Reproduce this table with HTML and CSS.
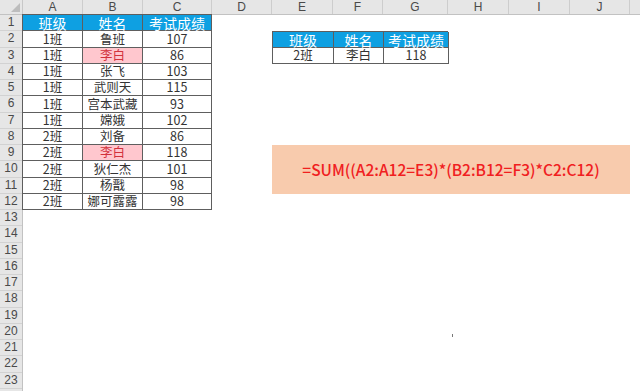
FILE: index.html
```html
<!DOCTYPE html>
<html lang="zh-CN">
<head>
<meta charset="utf-8">
<link rel="stylesheet" href="styles.css">
</head>
<body>
<div class="sheet">
  <div class="colhead">
    <div class="corner"><span class="tri"></span></div>
    <div class="ch w60">A</div>
    <div class="ch w60">B</div>
    <div class="ch w69">C</div>
    <div class="ch w60">D</div>
    <div class="ch w61">E</div>
    <div class="ch w50">F</div>
    <div class="ch w65">G</div>
    <div class="ch w61">H</div>
    <div class="ch w61">I</div>
    <div class="ch w60">J</div>
    <div class="ch wrest"></div>
  </div>
  <div class="body">
    <div class="rowhead">
      <div class="rh">1</div><div class="rh">2</div><div class="rh">3</div><div class="rh">4</div>
      <div class="rh">5</div><div class="rh">6</div><div class="rh">7</div><div class="rh">8</div>
      <div class="rh">9</div><div class="rh">10</div><div class="rh">11</div><div class="rh">12</div>
      <div class="rh">13</div><div class="rh">14</div><div class="rh">15</div><div class="rh">16</div>
      <div class="rh">17</div><div class="rh">18</div><div class="rh">19</div><div class="rh">20</div>
      <div class="rh">21</div><div class="rh">22</div><div class="rh">23</div><div class="rh">24</div>
    </div>
    <div class="canvas">
      <div class="tbl left-table">
        <div class="th">班级</div><div class="th">姓名</div><div class="th">考试成绩</div>
        <div class="td">1班</div><div class="td">鲁班</div><div class="td">107</div>
        <div class="td">1班</div><div class="td hl">李白</div><div class="td">86</div>
        <div class="td">1班</div><div class="td">张飞</div><div class="td">103</div>
        <div class="td">1班</div><div class="td">武则天</div><div class="td">115</div>
        <div class="td">1班</div><div class="td">宫本武藏</div><div class="td">93</div>
        <div class="td">1班</div><div class="td">嫦娥</div><div class="td">102</div>
        <div class="td">2班</div><div class="td">刘备</div><div class="td">86</div>
        <div class="td">2班</div><div class="td hl">李白</div><div class="td">118</div>
        <div class="td">2班</div><div class="td">狄仁杰</div><div class="td">101</div>
        <div class="td">2班</div><div class="td">杨戬</div><div class="td">98</div>
        <div class="td">2班</div><div class="td">娜可露露</div><div class="td">98</div>
      </div>
      <div class="tbl right-table">
        <div class="th">班级</div><div class="th">姓名</div><div class="th">考试成绩</div>
        <div class="td">2班</div><div class="td">李白</div><div class="td">118</div>
      </div>
      <div class="formula">=SUM((A2:A12=E3)*(B2:B12=F3)*C2:C12)</div>
      <div class="dot"></div>
    </div>
  </div>
</div>
</body>
</html>
```

FILE: styles.css
```css
* { box-sizing: border-box; }
html, body { margin: 0; padding: 0; background: #fff; }
body { width: 640px; height: 391px; overflow: hidden; }

.sheet {
  width: 640px;
  height: 391px;
  overflow: hidden;
  display: flex;
  flex-direction: column;
  font-family: "Noto Sans CJK SC", "Noto Sans", sans-serif;
}

.colhead {
  display: flex;
  height: 15px;
  flex: none;
  background: #e6e6e6;
  border-bottom: 1px solid #c2c2c2;
}
.corner {
  width: 23px;
  flex: none;
  border-right: 1px solid #c8c8c8;
  position: relative;
}
.tri {
  position: absolute;
  right: 2px;
  bottom: 2px;
  width: 0;
  height: 0;
  border-left: 9px solid transparent;
  border-bottom: 9px solid #bdbdbd;
}
.ch {
  flex: none;
  border-right: 1px solid #cdcdcd;
  text-align: center;
  font: 12px/14px "Liberation Sans", sans-serif;
  color: #4a4a4a;
}
.w60 { width: 60px; }
.w69 { width: 69px; }
.w61 { width: 61px; }
.w50 { width: 50px; }
.w65 { width: 65px; }
.wrest { flex: 1; border-right: 0; }

.body {
  display: flex;
  flex: 1;
  min-height: 0;
}
.rowhead {
  width: 23px;
  flex: none;
  display: flex;
  flex-direction: column;
  background: #e6e6e6;
  border-right: 1px solid #c2c2c2;
}
.rh {
  height: 16.25px;
  flex: none;
  border-bottom: 1px solid #d2d2d2;
  text-align: center;
  font: 12px/15px "Liberation Sans", sans-serif;
  color: #4a4a4a;
  overflow: hidden;
}

.canvas {
  flex: 1;
  display: grid;
  grid-template-columns: 60px 60px 69px 60px 61px 50px 65px 61px 61px 60px 1fr;
  grid-template-rows: repeat(23, 16.25px);
}

.tbl {
  display: grid;
  border-top: 1px solid #5e5e5e;
  border-left: 1px solid #5e5e5e;
  margin-top: -1px;
}
.left-table {
  grid-column: 1 / 4;
  grid-row: 1 / 13;
  grid-template-columns: 60px 60px 69px;
  grid-template-rows: repeat(12, 1fr);
  margin-left: -1px;
}
.right-table {
  grid-column: 5 / 8;
  grid-row: 2 / 4;
  grid-template-columns: 61px 50px 65px;
  grid-template-rows: repeat(2, 1fr);
  margin-top: 0;
}
.th, .td {
  border-right: 1px solid #5e5e5e;
  border-bottom: 1px solid #5e5e5e;
  display: flex;
  align-items: center;
  justify-content: center;
  white-space: nowrap;
  line-height: 1;
  min-height: 0;
}
.th {
  background: #0ea0e2;
  color: #fff;
  font-size: 14px;
}
.td {
  color: #333;
  font-size: 12.5px;
}
.td.hl {
  background: #ffc7ce;
  color: #d2323c;
}

.formula {
  grid-column: 5 / 11;
  grid-row: 9 / 12;
  background: #f8cbad;
  color: #f0201f;
  display: flex;
  align-items: center;
  justify-content: center;
  font-size: 15.5px;
  font-weight: 500;
  line-height: 1;
  padding-top: 1px;
}

.dot {
  grid-column: 8;
  grid-row: 20;
  width: 1px;
  height: 3px;
  background: #777;
  margin: 10px 0 0 4px;
}
```
